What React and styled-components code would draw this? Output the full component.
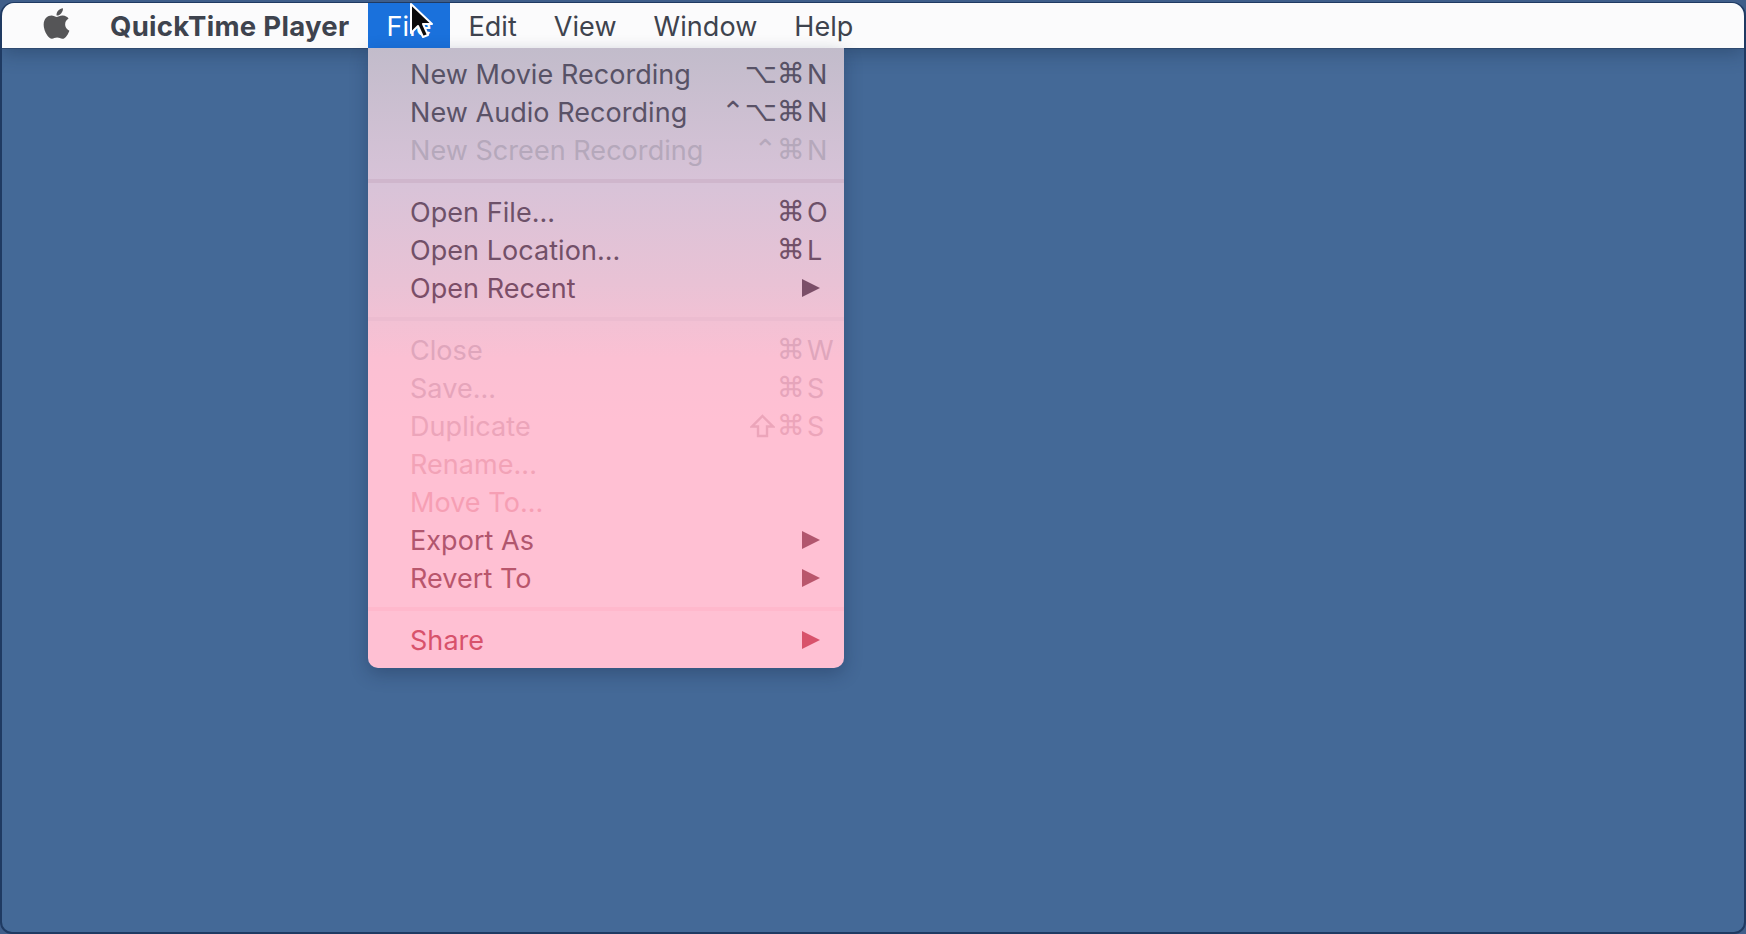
import React from 'react';
import styled, { createGlobalStyle } from 'styled-components';
import { FaApple } from 'react-icons/fa';

const GlobalStyle = createGlobalStyle`
  html, body { margin: 0; padding: 0; background: #3f5e8a; overflow: hidden; }
  body { font-family: Inter, "Liberation Sans", sans-serif; }
`;

const Screen = styled.div`
  position: relative;
  width: 1746px;
  height: 934px;
  box-sizing: border-box;
  padding-top: 2px;
`;

const Desktop = styled.div`
  height: 932px;
  box-sizing: border-box;
  border: 2px solid #1f3a62;
  border-top-width: 1px;
  border-radius: 14px 14px 12px 12px;
  overflow: hidden;
  background: #446997;
  display: flex;
  flex-direction: column;
`;

const MenuBar = styled.div`
  height: 45px;
  flex: none;
  display: flex;
  align-items: stretch;
  background: #fbfbfc;
  box-shadow: 0 1px 0 #2f4a70, 0 6px 18px rgba(20, 40, 70, 0.35);
  color: #3e434e;
  font-size: 27px;
  letter-spacing: 0.05px;
  white-space: nowrap;
  position: relative;
`;

const AppleSlot = styled.div`
  width: 108px;
  display: flex;
  align-items: center;
  justify-content: center;
  color: #555557;
  font-size: 35px;
  margin-top: -5px;
`;

const BarItem = styled.div`
  display: flex;
  align-items: center;
  padding: 1px ${(p) => p.$pad ?? 18.5}px 0;
  font-weight: ${(p) => (p.$bold ? 700 : 400)};
  font-size: ${(p) => (p.$bold ? '27.5px' : 'inherit')};
  letter-spacing: ${(p) => (p.$bold ? '0.3px' : 'inherit')};
  color: ${(p) => (p.$active ? '#fff' : 'inherit')};
  background: ${(p) => (p.$active ? '#1a71dc' : 'none')};
  width: ${(p) => (p.$width ? `${p.$width}px` : 'auto')};
  box-sizing: ${(p) => (p.$width ? 'border-box' : 'content-box')};
`;

const Menu = styled.div`
  position: absolute;
  left: 368px;
  top: 48px;
  width: 476px;
  height: 620px;
  box-sizing: border-box;
  padding-top: 7px;
  border-radius: 0 0 10px 10px;
  background: linear-gradient(
    180deg,
    #c2bccb 0%,
    #d8c3d8 22%,
    #e9c2d5 38%,
    #fbc0d3 50%,
    #ffc0d3 60%,
    #ffc0d3 100%
  );
  box-shadow: 0 6px 18px rgba(15, 30, 60, 0.3);
  font-size: 27px;
  letter-spacing: 0.05px;
  white-space: nowrap;
`;

const Row = styled.div`
  height: 38px;
  display: flex;
  align-items: center;
  padding-left: 42px;
  color: ${(p) => p.$color};
  position: relative;
`;

const Label = styled.span`
  flex: 1;
`;

const Shortcut = styled.span`
  display: grid;
  grid-template-columns: 88px 42px;
  align-items: center;
  margin-right: -3px;
`;

const Mods = styled.span`
  display: flex;
  justify-content: flex-end;
  align-items: center;
  font-family: "DejaVu Sans", sans-serif;
  font-size: 28px;
  letter-spacing: 0;
  line-height: 38px;
`;

const Key = styled.span`
  padding-left: 2px;
`;

const ShiftIcon = styled.svg`
  width: 25px;
  height: 24px;
  margin-right: 2px;
  flex: none;
`;

const Arrow = styled.span`
  position: absolute;
  left: 434px;
  top: 9.5px;
  border-style: solid;
  border-width: 9.5px 0 9.5px 18px;
  border-color: transparent transparent transparent ${(p) => p.$color};
`;

const Separator = styled.div`
  height: 4px;
  margin: 10px 0;
  background: ${(p) => p.$color};
`;

const Pointer = styled.svg`
  position: absolute;
  left: 408px;
  top: 2px;
  width: 26px;
  height: 38px;
`;

const groups = [
  {
    sep: '#cfb6cc',
    rows: [
      { label: 'New Movie Recording', mods: '⌥⌘', key: 'N', color: '#575266' },
      { label: 'New Audio Recording', mods: '⌃⌥⌘', key: 'N', color: '#5a5267' },
      { label: 'New Screen Recording', mods: '⌃⌘', key: 'N', color: '#b5a8bb' },
    ],
  },
  {
    sep: '#ecbcd0',
    rows: [
      { label: 'Open File...', mods: '⌘', key: 'O', color: '#6d5169' },
      { label: 'Open Location...', mods: '⌘', key: 'L', color: '#725068' },
      { label: 'Open Recent', arrow: true, color: '#7b4e68' },
    ],
  },
  {
    sep: '#ffb8cc',
    rows: [
      { label: 'Close', mods: '⌘', key: 'W', color: '#dfa6bc' },
      { label: 'Save...', mods: '⌘', key: 'S', color: '#e6a5bb' },
      { label: 'Duplicate', shift: true, mods: '⌘', key: 'S', color: '#eca5ba' },
      { label: 'Rename...', color: '#f2a3b7' },
      { label: 'Move To...', color: '#f69fb4' },
      { label: 'Export As', arrow: true, color: '#b1566e' },
      { label: 'Revert To', arrow: true, color: '#b9566c' },
    ],
  },
  {
    rows: [{ label: 'Share', arrow: true, color: '#d8526b' }],
  },
];

const App = () => (
  <Screen>
    <GlobalStyle />
    <Desktop>
      <MenuBar>
        <AppleSlot>
          <FaApple />
        </AppleSlot>
        <BarItem $bold $pad={0} $width={258}>
          QuickTime Player
        </BarItem>
        <BarItem $active $width={82}>
          File
        </BarItem>
        <BarItem>Edit</BarItem>
        <BarItem>View</BarItem>
        <BarItem>Window</BarItem>
        <BarItem>Help</BarItem>
      </MenuBar>
    </Desktop>
    <Menu>
      {groups.map((group, i) => (
        <React.Fragment key={i}>
          {group.rows.map((row) => (
            <Row key={row.label} $color={row.color}>
              <Label>{row.label}</Label>
              {row.key && (
                <Shortcut>
                  <Mods>
                    {row.shift && (
                      <ShiftIcon viewBox="0 0 25 24">
                        <path
                          d="M12.5 2 L23 12.5 L17 12.5 L17 22 L8 22 L8 12.5 L2 12.5 Z"
                          fill="none"
                          stroke={row.color}
                          strokeWidth="2.4"
                          strokeLinejoin="miter"
                        />
                      </ShiftIcon>
                    )}
                    {row.mods}
                  </Mods>
                  <Key>{row.key}</Key>
                </Shortcut>
              )}
              {row.arrow && <Arrow $color={row.color} />}
            </Row>
          ))}
          {group.sep && <Separator $color={group.sep} />}
        </React.Fragment>
      ))}
    </Menu>
    <Pointer viewBox="0 0 26 38">
      <path
        d="M3 2 L3 31 L10 24 L15 35 L20 33 L15 22 L24 22 Z"
        fill="#0b0b0b"
        stroke="#fff"
        strokeWidth="2"
        strokeLinejoin="round"
      />
    </Pointer>
  </Screen>
);

export default App;
